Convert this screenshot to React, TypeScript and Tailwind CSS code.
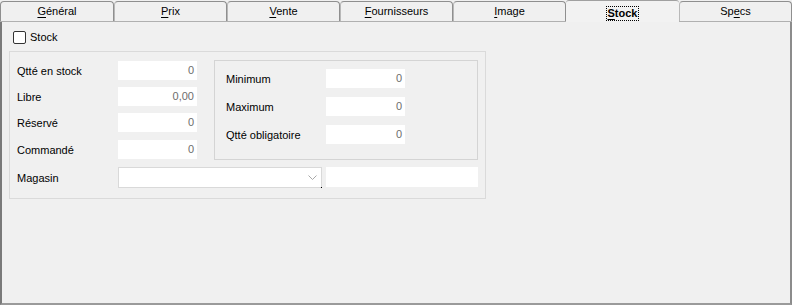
import React from "react";

const tabs: { pre: string; u: string; post: string }[] = [
  { pre: "", u: "G", post: "énéral" },
  { pre: "", u: "P", post: "rix" },
  { pre: "", u: "V", post: "ente" },
  { pre: "", u: "F", post: "ournisseurs" },
  { pre: "", u: "I", post: "mage" },
  { pre: "", u: "S", post: "tock" },
  { pre: "Sp", u: "e", post: "cs" },
];

function Field({ value, w = "w-[79px]" }: { value: string; w?: string }) {
  return (
    <div className={`${w} h-[19px] bg-white flex items-center justify-end pr-[3px] text-[#6d6d6d]`}>
      {value}
    </div>
  );
}

function Row({ label, value, lw }: { label: string; value: string; lw: string }) {
  return (
    <div className="flex items-center h-[19px]">
      <div className={`${lw} text-black pt-[1px]`}>{label}</div>
      <Field value={value} />
    </div>
  );
}

export default function App() {
  return (
    <div
      className="w-[792px] h-[305px] bg-[#f0f0f0] flex flex-col text-[11px] text-black leading-none"
      style={{ fontFamily: '"Liberation Sans", Arial, sans-serif' }}
    >
      {/* tab strip */}
      <div className="flex h-[22px] shrink-0">
        {tabs.map((t, i) => {
          const active = i === 5;
          const w = i === 0 ? "w-[114px]" : "w-[113px]";
          if (active) {
            return (
              <div
                key={i}
                className={`${w} h-[22px] bg-[#f2f2f2] border-t border-[#a0a0a0] rounded-t-[3px] flex items-center justify-center pt-[3px] relative z-10`}
              >
                <span className="font-bold outline-dotted outline-1 outline-black px-[1px] py-[1px]">
                  <span className="underline underline-offset-2">{t.u}</span>
                  {t.post}
                </span>
              </div>
            );
          }
          return (
            <div key={i} className={`${w} h-[22px] flex flex-col`}>
              <div
                className={`flex-1 mt-[1px] bg-[#f0f0f0] border-t border-r border-[#8f8f8f] rounded-tr-[4px] ${
                  i === 0 ? "border-l rounded-tl-[4px]" : "rounded-tl-[4px] border-l border-l-[#b8b8b8]"
                } flex items-center justify-center`}
              >
                <span>
                  {t.pre}
                  <span className="underline underline-offset-2">{t.u}</span>
                  {t.post}
                </span>
              </div>
              <div className="h-[1px] bg-[#b0b0b0]" />
            </div>
          );
        })}
      </div>

      {/* panel */}
      <div className="flex-1 border-l-2 border-l-[#7a7a7a] border-r-2 border-r-[#8c8c8c] border-b-2 border-b-[#9a9a9a] pl-[7px] flex flex-col">
        <div className="flex items-center mt-[9px] ml-[4px] h-[13px]">
          <div className="w-[13px] h-[13px] border border-[#333333] rounded-[2px] bg-white" />
          <span className="ml-[4px]">Stock</span>
        </div>

        <div className="mt-[7px] w-[477px] border border-[#dadada] pt-[8px] pl-[7px] pr-[7px] pb-[10px] flex flex-col">
          <div className="flex items-start">
            <div className="flex flex-col mt-[1px]">
              <Row label="Qtté en stock" value="0" lw="w-[101px]" />
              <div className="h-[7px]" />
              <Row label="Libre" value="0,00" lw="w-[101px]" />
              <div className="h-[7px]" />
              <Row label="Réservé" value="0" lw="w-[101px]" />
              <div className="h-[8px]" />
              <Row label="Commandé" value="0" lw="w-[101px]" />
            </div>
            <div className="ml-[17px] w-[264px] h-[100px] border border-[#d4d4d4] pt-[8px] pl-[11px] flex flex-col gap-[9px]">
              <Row label="Minimum" value="0" lw="w-[100px]" />
              <Row label="Maximum" value="0" lw="w-[100px]" />
              <Row label="Qtté obligatoire" value="0" lw="w-[100px]" />
            </div>
          </div>

          <div className="flex items-start mt-[7px]">
            <div className="w-[101px] h-[21px] flex items-center pt-[1px]">Magasin</div>
            <div className="w-[204px] h-[21px] bg-white border border-[#d9d9d9] relative flex items-center justify-end pr-[4px]">
              <svg width="9" height="6" viewBox="0 0 9 6" fill="none">
                <path d="M0.5 0.5 L4.5 4.5 L8.5 0.5" stroke="#a8a8a8" strokeWidth="1" />
              </svg>
              <div className="absolute right-[-1px] bottom-[-1px] w-[1px] h-[1px] bg-black" />
            </div>
            <div className="ml-[4px] w-[152px] h-[20px] bg-white" />
          </div>
        </div>
      </div>
    </div>
  );
}
